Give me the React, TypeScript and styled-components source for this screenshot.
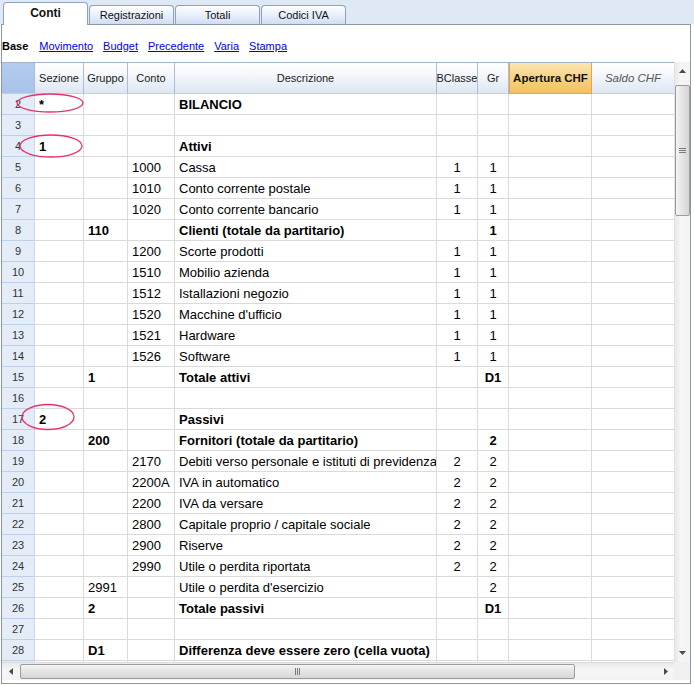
import React from "react";
import styled, { createGlobalStyle, css } from "styled-components";

const GlobalStyle = createGlobalStyle`
  html, body { margin: 0; padding: 0; background: #fff; }
  body { font-family: "Liberation Sans", Arial, sans-serif; color: #000; }
`;

const COLS = "33px 49px 44px 47px 262px 41px 31px 83px 82px";

type Row = {
  n: number;
  sez?: string;
  grp?: string;
  conto?: string;
  desc?: string;
  bc?: string;
  gr?: string;
  bold?: boolean;
};

const rows: Row[] = [
  { n: 2, sez: "*", desc: "BILANCIO", bold: true },
  { n: 3 },
  { n: 4, sez: "1", desc: "Attivi", bold: true },
  { n: 5, conto: "1000", desc: "Cassa", bc: "1", gr: "1" },
  { n: 6, conto: "1010", desc: "Conto corrente postale", bc: "1", gr: "1" },
  { n: 7, conto: "1020", desc: "Conto corrente bancario", bc: "1", gr: "1" },
  { n: 8, grp: "110", desc: "Clienti (totale da partitario)", gr: "1", bold: true },
  { n: 9, conto: "1200", desc: "Scorte prodotti", bc: "1", gr: "1" },
  { n: 10, conto: "1510", desc: "Mobilio azienda", bc: "1", gr: "1" },
  { n: 11, conto: "1512", desc: "Istallazioni negozio", bc: "1", gr: "1" },
  { n: 12, conto: "1520", desc: "Macchine d'ufficio", bc: "1", gr: "1" },
  { n: 13, conto: "1521", desc: "Hardware", bc: "1", gr: "1" },
  { n: 14, conto: "1526", desc: "Software", bc: "1", gr: "1" },
  { n: 15, grp: "1", desc: "Totale attivi", gr: "D1", bold: true },
  { n: 16 },
  { n: 17, sez: "2", desc: "Passivi", bold: true },
  { n: 18, grp: "200", desc: "Fornitori (totale da partitario)", gr: "2", bold: true },
  { n: 19, conto: "2170", desc: "Debiti verso personale e istituti di previdenza", bc: "2", gr: "2" },
  { n: 20, conto: "2200A", desc: "IVA in automatico", bc: "2", gr: "2" },
  { n: 21, conto: "2200", desc: "IVA da versare", bc: "2", gr: "2" },
  { n: 22, conto: "2800", desc: "Capitale proprio / capitale sociale", bc: "2", gr: "2" },
  { n: 23, conto: "2900", desc: "Riserve", bc: "2", gr: "2" },
  { n: 24, conto: "2990", desc: "Utile o perdita riportata", bc: "2", gr: "2" },
  { n: 25, grp: "2991", desc: "Utile o perdita d'esercizio", gr: "2" },
  { n: 26, grp: "2", desc: "Totale passivi", gr: "D1", bold: true },
  { n: 27 },
  { n: 28, grp: "D1", desc: "Differenza deve essere zero (cella vuota)", bold: true },
  { n: 29 },
];

const Page = styled.div`
  position: relative;
  width: 694px;
  height: 685px;
  overflow: hidden;
  background: #fff;
`;

const TabBar = styled.div`
  display: flex;
  align-items: flex-end;
  gap: 1px;
  height: 24px;
  padding-left: 3px;
  background: #dfe9f5;
`;

const Tab = styled.div<{ $active?: boolean }>`
  box-sizing: border-box;
  width: 85px;
  display: flex;
  align-items: center;
  justify-content: center;
  border: 1px solid #8fa2bc;
  border-bottom: none;
  border-radius: 4px 4px 0 0;
  font-size: 11px;
  color: #111;
  ${(p) =>
    p.$active
      ? css`
          height: 23px;
          margin-bottom: -1px;
          padding-bottom: 3px;
          background: #fff;
          font-weight: bold;
          font-size: 12px;
          position: relative;
          z-index: 1;
        `
      : css`
          height: 19px;
          padding-bottom: 1px;
          background: linear-gradient(#fdfeff, #e6eefa 55%, #cfddf3);
        `}
`;

const Panel = styled.div`
  margin: 0 3px 0 1px;
  border: 1px solid #8c97a6;
  display: flex;
  flex-direction: column;
`;

const Toolbar = styled.div`
  display: flex;
  align-items: center;
  gap: 10px;
  height: 37px;
  padding-top: 5px;
  box-sizing: border-box;
  font-size: 11px;
`;

const ToolLabel = styled.span`
  font-weight: bold;
  margin-right: 1px;
`;

const ToolLink = styled.span`
  color: #0000ee;
  text-decoration: underline;
`;

const Frame = styled.div`
  display: grid;
  grid-template-columns: 672px 16px;
  grid-template-rows: 600px 18px;
  margin-bottom: 3px;
`;

const Sheet = styled.div`
  overflow: hidden;
  border-top: 1px solid #a1b3c8;
`;

const GridRow = styled.div<{ $head?: boolean }>`
  display: grid;
  grid-template-columns: ${COLS};
  height: ${(p) => (p.$head ? 31 : 21)}px;
`;

const HeadCell = styled.div<{ $kind?: "corner" | "open" | "saldo" }>`
  box-sizing: border-box;
  display: flex;
  align-items: center;
  justify-content: center;
  white-space: nowrap;
  overflow: hidden;
  font-size: 11px;
  color: #1a1a1a;
  border-right: 1px solid #a9bed6;
  border-bottom: 1px solid #c3d1e2;
  background: linear-gradient(#ffffff, #f2f6fb 45%, #dde6f1);
  ${(p) =>
    p.$kind === "corner" &&
    css`
      background: linear-gradient(#b3ccee, #a8c3e9);
      border-right: 1px solid #a6bcd8;
    `}
  ${(p) =>
    p.$kind === "open" &&
    css`
      background: linear-gradient(#fbe6b0, #f7d283 50%, #f3c15f);
      border: 1px solid #eda24a;
      border-top: none;
      font-weight: bold;
      font-size: 11.5px;
      color: #111;
    `}
  ${(p) =>
    p.$kind === "saldo" &&
    css`
      font-style: italic;
      color: #555;
      font-size: 11.5px;
      border-right: none;
    `}
`;

const NumCell = styled.div`
  box-sizing: border-box;
  display: flex;
  align-items: center;
  justify-content: center;
  font-size: 11px;
  color: #333;
  background: #e3ecf7;
  border-bottom: 1px solid #bdd0e7;
  border-right: 1px solid #c9d8ea;
`;

const Cell = styled.div<{ $center?: boolean; $bold?: boolean; $last?: boolean }>`
  box-sizing: border-box;
  display: flex;
  align-items: center;
  justify-content: ${(p) => (p.$center ? "center" : "flex-start")};
  padding-left: ${(p) => (p.$center ? 0 : 4)}px;
  white-space: nowrap;
  overflow: hidden;
  font-size: 13px;
  font-weight: ${(p) => (p.$bold ? "bold" : "normal")};
  border-bottom: 1px solid #dadada;
  border-right: ${(p) => (p.$last ? "none" : "1px solid #dadada")};
`;

const VScroll = styled.div`
  display: flex;
  flex-direction: column;
  align-items: center;
  background: linear-gradient(90deg, #e9e9e9, #f6f6f6 40%, #f3f3f3);
  border-left: 1px solid #e2e2e2;
`;

const HScroll = styled.div`
  display: flex;
  align-items: center;
  background: linear-gradient(#e9e9e9, #f6f6f6 40%, #f3f3f3);
  border-top: 1px solid #dcdcdc;
`;

const ScrollBtn = styled.div<{ $vertical?: boolean }>`
  flex: none;
  display: flex;
  align-items: center;
  justify-content: center;
  width: ${(p) => (p.$vertical ? "16px" : "17px")};
  height: ${(p) => (p.$vertical ? "18px" : "17px")};
`;

const Thumb = styled.div<{ $vertical?: boolean }>`
  box-sizing: border-box;
  display: flex;
  align-items: center;
  justify-content: center;
  border: 1px solid #9b9b9b;
  border-radius: 2px;
  ${(p) =>
    p.$vertical
      ? css`
          width: 15px;
          height: 131px;
          margin-top: 5px;
          background: linear-gradient(90deg, #f4f4f4, #e4e4e4 50%, #d6d6d6);
        `
      : css`
          height: 15px;
          width: 555px;
          margin-left: 1px;
          background: linear-gradient(#f4f4f4, #e4e4e4 50%, #d6d6d6);
        `}
`;

const Spacer = styled.div`
  flex: 1;
`;

const Corner = styled.div`
  background: #f0f0f0;
`;

const Marks = styled.svg`
  position: absolute;
  left: 0;
  top: 0;
  pointer-events: none;
`;

const Arrow = ({ dir }: { dir: "up" | "down" | "left" | "right" }) => {
  const pts = {
    up: "0,4 3.5,0 7,4",
    down: "0,0 3.5,4 7,0",
    left: "4,0 0,3.5 4,7",
    right: "0,0 4,3.5 0,7",
  }[dir];
  const vert = dir === "up" || dir === "down";
  return (
    <svg width={vert ? 7 : 4} height={vert ? 4 : 7}>
      <polygon points={pts} fill="#4a4a4a" />
    </svg>
  );
};

const Grip = ({ vertical }: { vertical?: boolean }) => (
  <svg width={7} height={7}>
    {[1, 3, 5].map((v) =>
      vertical ? (
        <line key={v} x1={0} x2={7} y1={v + 0.5} y2={v + 0.5} stroke="#7a7a7a" strokeWidth={1} />
      ) : (
        <line key={v} y1={0} y2={7} x1={v + 0.5} x2={v + 0.5} stroke="#7a7a7a" strokeWidth={1} />
      )
    )}
  </svg>
);

export default function App() {
  return (
    <Page>
      <GlobalStyle />
      <TabBar>
        <Tab $active>Conti</Tab>
        <Tab>Registrazioni</Tab>
        <Tab>Totali</Tab>
        <Tab>Codici IVA</Tab>
      </TabBar>
      <Panel>
        <Toolbar>
          <ToolLabel>Base</ToolLabel>
          <ToolLink>Movimento</ToolLink>
          <ToolLink>Budget</ToolLink>
          <ToolLink>Precedente</ToolLink>
          <ToolLink>Varia</ToolLink>
          <ToolLink>Stampa</ToolLink>
        </Toolbar>
        <Frame>
          <Sheet>
            <GridRow $head>
              <HeadCell $kind="corner" />
              <HeadCell>Sezione</HeadCell>
              <HeadCell>Gruppo</HeadCell>
              <HeadCell>Conto</HeadCell>
              <HeadCell>Descrizione</HeadCell>
              <HeadCell>BClasse</HeadCell>
              <HeadCell>Gr</HeadCell>
              <HeadCell $kind="open">Apertura CHF</HeadCell>
              <HeadCell $kind="saldo">Saldo CHF</HeadCell>
            </GridRow>
            {rows.map((r) => (
              <GridRow key={r.n}>
                <NumCell>{r.n}</NumCell>
                <Cell $bold={r.bold}>{r.sez}</Cell>
                <Cell $bold={r.bold}>{r.grp}</Cell>
                <Cell>{r.conto}</Cell>
                <Cell $bold={r.bold}>{r.desc}</Cell>
                <Cell $center>{r.bc}</Cell>
                <Cell $center $bold={r.bold}>{r.gr}</Cell>
                <Cell />
                <Cell $last />
              </GridRow>
            ))}
          </Sheet>
          <VScroll>
            <ScrollBtn $vertical>
              <Arrow dir="up" />
            </ScrollBtn>
            <Thumb $vertical>
              <Grip vertical />
            </Thumb>
            <Spacer />
            <ScrollBtn $vertical>
              <Arrow dir="down" />
            </ScrollBtn>
          </VScroll>
          <HScroll>
            <ScrollBtn>
              <Arrow dir="left" />
            </ScrollBtn>
            <Thumb>
              <Grip />
            </Thumb>
            <Spacer />
            <ScrollBtn>
              <Arrow dir="right" />
            </ScrollBtn>
          </HScroll>
          <Corner />
        </Frame>
      </Panel>
      <Marks width={694} height={685}>
        <g fill="none" stroke="#e8336a" strokeWidth={1.3}>
          <ellipse cx={50} cy={103} rx={33} ry={9} />
          <ellipse cx={51} cy={146} rx={31} ry={11} />
          <ellipse cx={48} cy={417} rx={26} ry={12.5} />
        </g>
      </Marks>
    </Page>
  );
}
